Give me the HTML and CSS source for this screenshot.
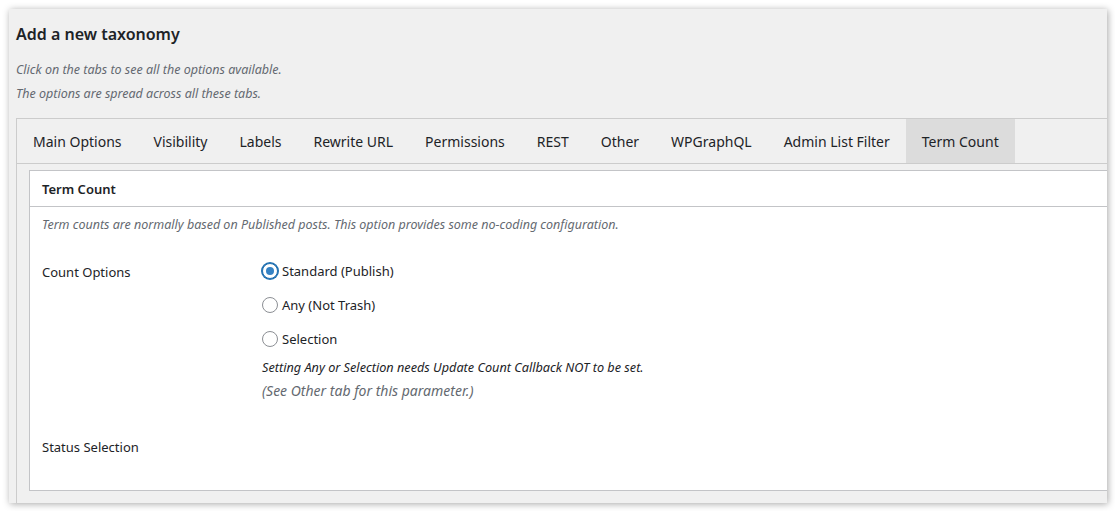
FILE: index.html
```html
<!DOCTYPE html>
<html>
<head>
<meta charset="utf-8">
<link rel="stylesheet" href="styles.css">
</head>
<body>
<div class="panel">
  <h2 class="title">Add a new taxonomy</h2>
  <p class="hint">Click on the tabs to see all the options available.</p>
  <p class="hint">The options are spread across all these tabs.</p>
  <div class="tabs">
    <nav class="tabbar">
      <span class="tab">Main Options</span>
      <span class="tab">Visibility</span>
      <span class="tab">Labels</span>
      <span class="tab">Rewrite URL</span>
      <span class="tab">Permissions</span>
      <span class="tab">REST</span>
      <span class="tab">Other</span>
      <span class="tab">WPGraphQL</span>
      <span class="tab">Admin List Filter</span>
      <span class="tab active">Term Count</span>
    </nav>
    <div class="tabcontent">
      <div class="box">
        <div class="box-head">Term Count</div>
        <div class="box-body">
          <p class="desc">Term counts are normally based on Published posts. This option provides some no-coding configuration.</p>
          <div class="row">
            <div class="label">Count Options</div>
            <div class="field">
              <label class="radio"><span class="dot checked"></span>Standard (Publish)</label>
              <label class="radio"><span class="dot"></span>Any (Not Trash)</label>
              <label class="radio last"><span class="dot"></span>Selection</label>
              <p class="note">Setting Any or Selection needs Update Count Callback NOT to be set.</p>
              <p class="note note-sub">(See Other tab for this parameter.)</p>
            </div>
          </div>
          <div class="row row2">
            <div class="label">Status Selection</div>
            <div class="field"></div>
          </div>
        </div>
      </div>
    </div>
  </div>
</div>
</body>
</html>
```
FILE: styles.css
```css
html, body {
  margin: 0;
  padding: 0;
  background: #ffffff;
}
body {
  padding: 9px 8px 8px 9px;
  font-family: "Noto Sans", "Open Sans", sans-serif;
  color: #1d2327;
}
.panel {
  width: 1098px;
  height: 494px;
  background: #f0f0f0;
  box-shadow: 1px 1px 7px rgba(0, 0, 0, 0.35);
  padding-left: 7px;
  box-sizing: border-box;
  overflow: hidden;
}
.title {
  margin: 0;
  padding-top: 13px;
  font-size: 16px;
  font-weight: 600;
  line-height: 24px;
  height: 24px;
}
.hint {
  margin: 0;
  font-size: 12.5px;
  font-style: italic;
  color: #646970;
  line-height: 24px;
}
.title + .hint {
  margin-top: 12px;
}
.tabs {
  margin-top: 12px;
  border-top: 1px solid #cccccc;
  border-left: 1px solid #cccccc;
  height: 400px;
}
.tabbar {
  display: flex;
  height: 44px;
  border-bottom: 1px solid #cccccc;
}
.tab {
  padding: 1px 16px 0;
  line-height: 43px;
  font-size: 14px;
  color: #1d2327;
  white-space: nowrap;
}
.tab.active {
  background: #dcdcdc;
}
.tabcontent {
  padding: 6px 0 0 12px;
}
.box {
  background: #ffffff;
  border: 1px solid #c3c4c7;
  border-right: none;
  height: 319px;
}
.box-head {
  height: 35px;
  line-height: 36px;
  padding-left: 12px;
  font-size: 13px;
  font-weight: 600;
  border-bottom: 1px solid #c3c4c7;
}
.box-body {
  padding: 8px 12px 0;
}
.desc {
  margin: 0;
  font-size: 12.5px;
  font-style: italic;
  color: #646970;
  line-height: 20px;
}
.row {
  display: flex;
  margin-top: 24px;
}
.label {
  width: 220px;
  font-size: 13px;
  line-height: 24px;
  padding-top: 1px;
}
.field {
  display: flex;
  flex-direction: column;
}
.radio {
  display: flex;
  align-items: center;
  height: 24px;
  margin-bottom: 10px;
  font-size: 13px;
}
.radio.last {
  margin-bottom: 5px;
}
.dot {
  width: 14px;
  height: 14px;
  border: 1px solid #8c8f94;
  border-radius: 50%;
  margin-right: 4px;
  box-sizing: content-box;
  position: relative;
  background: #fff;
}
.dot.checked {
  border-color: #2271b1;
  box-shadow: 0 0 0 1px #2271b1;
}
.dot.checked::after {
  content: "";
  position: absolute;
  left: 3px;
  top: 3px;
  width: 8px;
  height: 8px;
  border-radius: 50%;
  background: #3582c4;
}
.note {
  margin: 0;
  font-size: 12.7px;
  font-style: italic;
  color: #1d2327;
  line-height: 23px;
}
.note-sub {
  font-size: 14px;
  color: #646970;
}
.row2 {
  margin-top: 32px;
}
```
